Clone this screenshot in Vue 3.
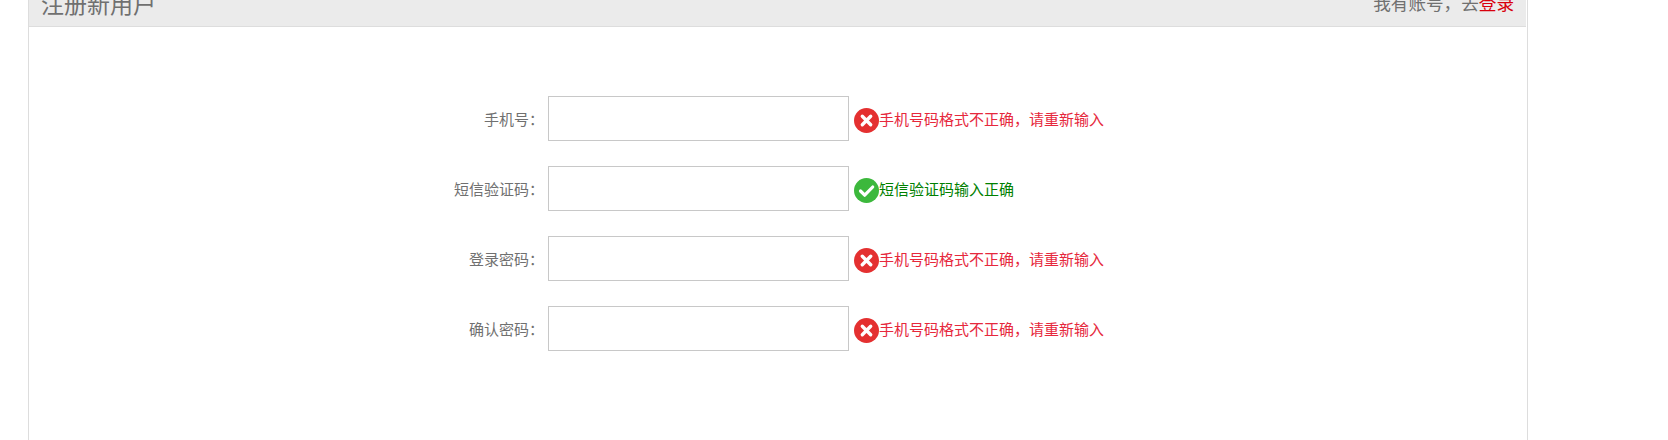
<script setup>
const rows = [
  { label: '手机号：', ok: false, msg: '手机号码格式不正确，请重新输入' },
  { label: '短信验证码：', ok: true, msg: '短信验证码输入正确' },
  { label: '登录密码：', ok: false, msg: '手机号码格式不正确，请重新输入' },
  { label: '确认密码：', ok: false, msg: '手机号码格式不正确，请重新输入' },
]
</script>

<template>
  <div class="page">
    <section class="panel">
      <header class="head">
        <h2 class="title">注册新用户</h2>
        <p class="login">我有账号，去<a class="link">登录</a></p>
      </header>
      <form class="form">
        <div v-for="row in rows" :key="row.label" class="row">
          <label class="label">{{ row.label }}</label>
          <input class="input" type="text" />
          <svg class="icon" viewBox="0 0 25 25" aria-hidden="true">
            <template v-if="row.ok">
              <circle cx="12.5" cy="12.5" r="12.5" fill="#3cb83c" />
              <path d="M6.5 13l4.2 4.2 8-8.2" fill="none" stroke="#fff" stroke-width="3.2" stroke-linecap="round" stroke-linejoin="round" />
            </template>
            <template v-else>
              <circle cx="12.5" cy="12.5" r="12.5" fill="#e43030" />
              <path d="M8.3 8.3l8.4 8.4M16.7 8.3l-8.4 8.4" fill="none" stroke="#fff" stroke-width="3.4" stroke-linecap="round" />
            </template>
          </svg>
          <span class="msg" :class="{ good: row.ok }">{{ row.msg }}</span>
        </div>
      </form>
    </section>
  </div>
</template>

<style>
html, body { overflow: hidden; background: #fff; }
</style>

<style scoped>
.page {
  height: 440px;
  overflow: hidden;
  padding-left: 28px;
  font-family: "Noto Sans CJK SC", "Liberation Sans", sans-serif;
}
.panel {
  box-sizing: border-box;
  width: 1500px;
  height: 600px;
  margin-top: -23px;
  border: 1px solid #ddd;
  border-top: 0;
}
.head {
  box-sizing: border-box;
  width: 1497px;
  height: 50px;
  padding: 2px 12px 0 12px;
  display: flex;
  justify-content: space-between;
  align-items: center;
  background: #ebebeb;
  border-bottom: 1px solid #ddd;
  color: #707070;
}
.title { margin: 0; font-size: 23px; font-weight: 400; }
.login { margin: 0; font-size: 17.6px; }
.link { color: #d8000c; }
.form { padding: 69px 0 0 0; }
.row {
  display: flex;
  align-items: center;
  height: 45px;
  margin-bottom: 25px;
}
.label {
  width: 515px;
  margin-right: 4px;
  text-align: right;
  font-size: 15px;
  color: #707070;
}
.input {
  box-sizing: border-box;
  width: 301px;
  height: 45px;
  margin: 0;
  padding: 0;
  border: 1px solid #c8c8c8;
  background: #fff;
}
.icon { width: 25px; height: 25px; margin: 4px 0 0 5px; flex: none; }
.msg { font-size: 15px; color: #e6283c; }
.msg.good { color: #008000; }
</style>
